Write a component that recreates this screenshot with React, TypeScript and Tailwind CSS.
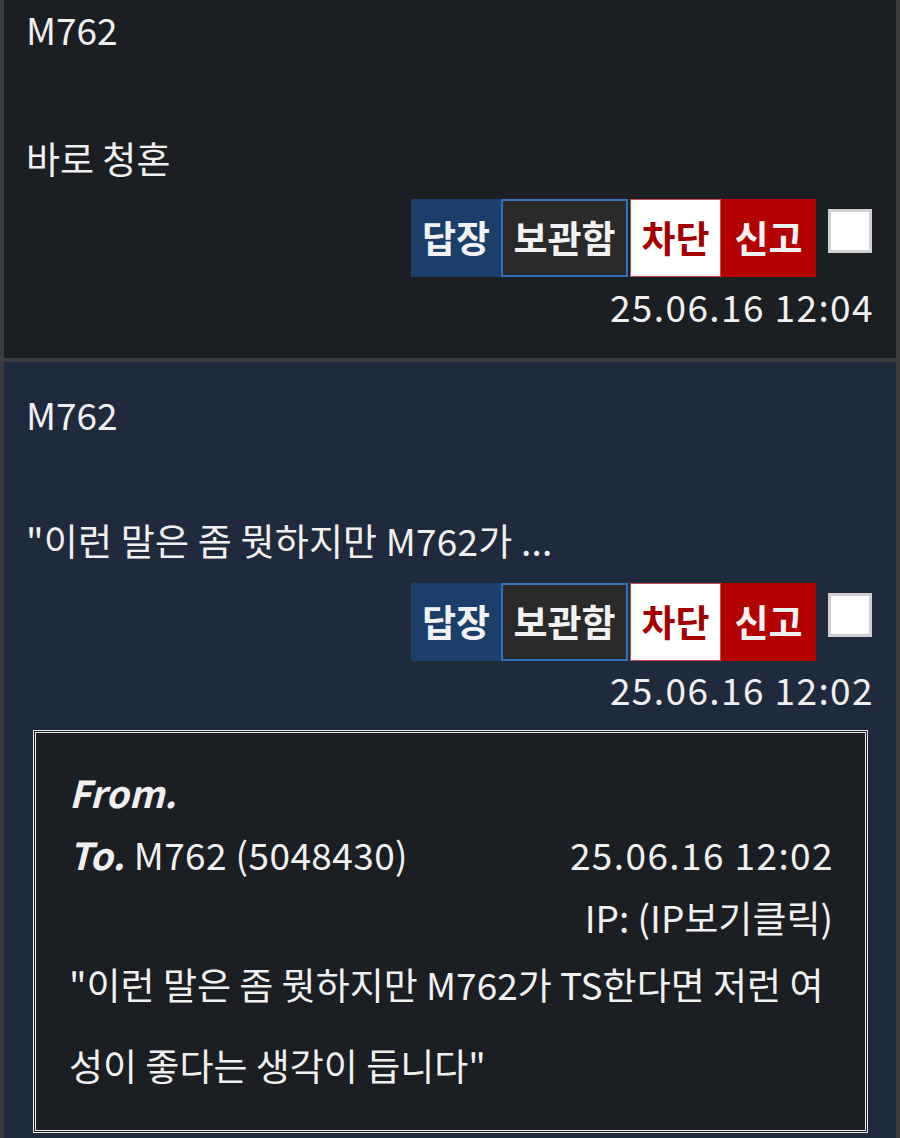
import React from "react";

const font = { fontFamily: '"Noto Sans CJK KR", "Noto Sans", sans-serif' };

function Actions() {
  return (
    <div className="flex justify-end items-start pr-[24px]">
      <div className="flex items-stretch h-[78px]">
        <div className="w-[90px] flex items-center justify-center bg-[#1c3e6b] text-[#f2f2f2] font-bold text-[37px]">답장</div>
        <div className="w-[127px] flex items-center justify-center bg-[#2a2a2b] border-2 border-[#3470c0] text-[#f2f2f2] font-bold text-[37px]">보관함</div>
        <div className="w-[91px] ml-[2px] flex items-center justify-center bg-white border border-[#c05050] text-[#a50000] font-bold text-[37px]">차단</div>
        <div className="w-[95px] flex items-center justify-center bg-[#b40000] text-[#f2f2f2] font-bold text-[37px]">신고</div>
      </div>
      <div className="ml-[12px] mt-[10px] w-[44px] h-[44px] bg-white border-[3px] border-[#d0d0d0]" />
    </div>
  );
}

export default function App() {
  return (
    <div style={font} className="bg-[#3b3c3e] px-[4px] h-[1138px] text-[#f0f0f0] flex flex-col gap-[4px] overflow-hidden">
      <div className="bg-[#1b1e23] pt-[5px] pb-[28px]">
        <div className="pl-[22px] text-[37px] leading-[48px]">M762</div>
        <div className="pl-[22px] mt-[81px] text-[37px] leading-[48px]">바로 청혼</div>
        <div className="mt-[17px]"><Actions /></div>
        <div className="mt-[5px] pr-[22px] text-right text-[37px] leading-[48px] tracking-[1.4px]">25.06.16 12:04</div>
      </div>
      <div className="bg-[#1f2b3c] pt-[28px] flex-1">
        <div className="pl-[22px] text-[37px] leading-[48px]">M762</div>
        <div className="pl-[22px] mt-[78px] text-[37px] leading-[48px] tracking-[0.2px]">"이런 말은 좀 뭣하지만 M762가 ...</div>
        <div className="mt-[19px]"><Actions /></div>
        <div className="mt-[4px] pr-[22px] text-right text-[37px] leading-[48px] tracking-[1.4px]">25.06.16 12:02</div>
        <div className="mt-[17px] ml-[29px] mr-[28px] border-[3px] border-double border-[#e8e8e8] bg-[#1b1e23] pl-[33px] pr-[32px] pt-[35px] pb-[24px] text-[37px]">
          <div className="leading-[48px] italic font-bold">From.</div>
          <div className="mt-[14px] flex justify-between leading-[48px]">
            <div className="tracking-[0.4px]"><span className="italic font-bold">To.</span> M762 (5048430)</div>
            <div className="tracking-[1.4px] -mr-[1px]">25.06.16 12:02</div>
          </div>
          <div className="mt-[15px] text-right leading-[48px]">IP: (IP보기클릭)</div>
          <div className="mt-[3px] leading-[81px]">"이런 말은 좀 뭣하지만 M762가 TS한다면 저런 여성이 좋다는 생각이 듭니다"</div>
        </div>
      </div>
    </div>
  );
}
